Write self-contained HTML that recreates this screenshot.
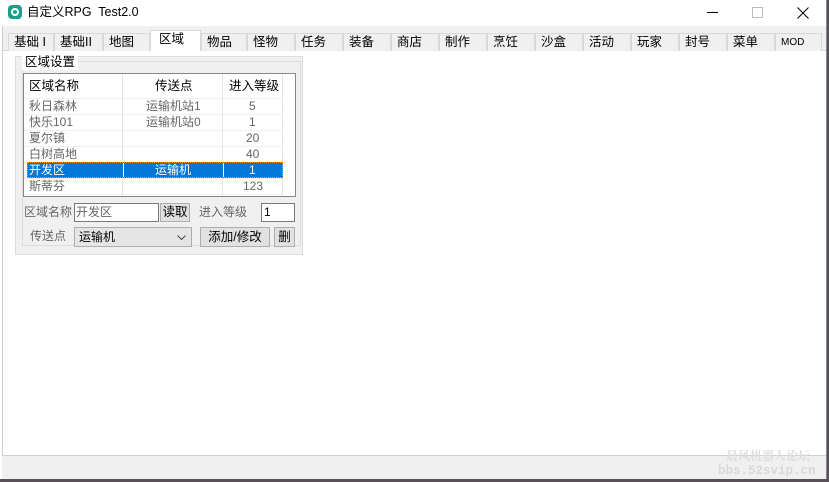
<!DOCTYPE html><html><head><style>
*{margin:0;padding:0;box-sizing:border-box}
body{width:829px;height:482px;background:#5a5058;position:relative;overflow:hidden;font-family:"Liberation Sans","Noto Sans CJK SC",sans-serif;font-size:12px;line-height:15px;color:#000}
.win{position:absolute;left:0;top:0;width:827px;height:479px;background:#fff;border-right:1px solid #888}
.a{position:absolute;white-space:nowrap}
.tab{position:absolute;top:33px;height:18px;border:1px solid #d9d9d9;border-bottom:none;background:#f0f0f0;font-size:12.5px;line-height:16px;padding:0 0 0 5px}
.cell{position:absolute;height:16px;line-height:16px;font-size:12px}
.btn{position:absolute;background:#e1e1e1;border:1px solid #adadad;text-align:center;font-size:12.5px;line-height:16px}
</style></head><body><div class="win">
<div class="a" style="left:8px;top:5px;width:14px;height:14px;border-radius:4px;background:#1a9f8a"></div>
<div class="a" style="left:11px;top:8px;width:8px;height:8px;border-radius:50%;border:2px solid #fff"></div>
<div class="a" style="left:27px;top:5px;font-size:12.5px">自定义RPG&nbsp; Test2.0</div>
<div class="a" style="left:707px;top:12px;width:11px;height:1px;background:#000"></div>
<div class="a" style="left:752px;top:7px;width:11px;height:11px;border:1px solid #bbb"></div>
<svg class="a" style="left:797px;top:7px" width="12" height="12"><path d="M0.5 0.5L11.5 11.5M11.5 0.5L0.5 11.5" stroke="#000" stroke-width="1"/></svg>
<div class="a" style="left:2px;top:26px;width:824px;height:24px;background:#f0f0f0"></div>
<div class="a" style="left:2px;top:50px;width:824px;height:1px;background:#d9d9d9"></div>
<div class="a" style="left:2px;top:26px;width:1px;height:430px;background:#ccc"></div>
<div class="tab" style="left:8px;width:46px">基础 I</div>
<div class="tab" style="left:54px;width:49px">基础II</div>
<div class="tab" style="left:103px;width:47px">地图</div>
<div class="tab" style="left:150px;width:51px;top:30px;height:21px;background:#fff;padding-left:8px;line-height:17px">区域</div>
<div class="tab" style="left:201px;width:46px">物品</div>
<div class="tab" style="left:247px;width:48px">怪物</div>
<div class="tab" style="left:295px;width:48px">任务</div>
<div class="tab" style="left:343px;width:48px">装备</div>
<div class="tab" style="left:391px;width:48px">商店</div>
<div class="tab" style="left:439px;width:48px">制作</div>
<div class="tab" style="left:487px;width:48px">烹饪</div>
<div class="tab" style="left:535px;width:48px">沙盒</div>
<div class="tab" style="left:583px;width:48px">活动</div>
<div class="tab" style="left:631px;width:48px">玩家</div>
<div class="tab" style="left:679px;width:48px">封号</div>
<div class="tab" style="left:727px;width:48px">菜单</div>
<div class="tab" style="left:775px;width:47px;font-size:10px;line-height:17px">MOD</div>
<div class="a" style="left:15px;top:56px;width:288px;height:199px;background:#f0f0f0;border:1px solid #dcdcdc"></div>
<div class="a" style="left:22px;top:61px;width:279px;height:185px;border:1px solid #dcdcdc"></div>
<div class="a" style="left:22px;top:54px;background:#fff;padding:0 3px;font-size:12.5px;line-height:16px">区域设置</div>
<div class="a" style="left:23px;top:73px;width:273px;height:124px;background:#fff;border:1px solid #828790"></div>
<div class="a" style="left:24px;top:98px;width:258px;height:98px;background:linear-gradient(#f0f0f0 1px,transparent 1px) 0 0/100% 16px"></div>
<div class="a" style="left:122px;top:74px;width:1px;height:122px;background:#e5e5e5"></div>
<div class="a" style="left:222px;top:74px;width:1px;height:122px;background:#e5e5e5"></div>
<div class="a" style="left:282px;top:74px;width:1px;height:122px;background:#e5e5e5"></div>
<div class="cell" style="left:29px;top:78px;font-size:12.5px">区域名称</div>
<div class="cell" style="left:155px;top:78px;font-size:12.5px">传送点</div>
<div class="cell" style="left:229px;top:78px;font-size:12.5px">进入等级</div>
<div class="cell" style="left:29px;top:98px;color:#666">秋日森林</div><div class="cell" style="left:146px;top:98px;color:#666">运输机站1</div><div class="cell" style="left:249px;top:98px;color:#666">5</div>
<div class="cell" style="left:29px;top:114px;color:#666">快乐101</div><div class="cell" style="left:146px;top:114px;color:#666">运输机站0</div><div class="cell" style="left:249px;top:114px;color:#666">1</div>
<div class="cell" style="left:29px;top:130px;color:#666">夏尔镇</div><div class="cell" style="left:246px;top:130px;color:#666">20</div>
<div class="cell" style="left:29px;top:146px;color:#666">白树高地</div><div class="cell" style="left:246px;top:146px;color:#666">40</div>
<div class="a" style="left:27px;top:162px;width:256px;height:16px;background:#0078d7;border:1px dotted #f90"></div>
<div class="a" style="left:123px;top:163px;width:1px;height:14px;background:#fff"></div><div class="a" style="left:223px;top:163px;width:1px;height:14px;background:#fff"></div>
<div class="cell" style="left:29px;top:162px;color:#fff">开发区</div><div class="cell" style="left:155px;top:162px;color:#fff">运输机</div><div class="cell" style="left:249px;top:162px;color:#fff">1</div>
<div class="cell" style="left:29px;top:178px;color:#666">斯蒂芬</div><div class="cell" style="left:243px;top:178px;color:#666">123</div>
<div class="a" style="left:24px;top:205px;color:#666">区域名称</div>
<div class="a" style="left:74px;top:203px;width:85px;height:19px;background:#fff;border:1px solid #7a7a7a;padding:1px 1px;color:#666">开发区</div>
<div class="btn" style="left:160px;top:203px;width:30px;height:19px;line-height:17px">读取</div>
<div class="a" style="left:199px;top:205px;color:#666">进入等级</div>
<div class="a" style="left:261px;top:203px;width:34px;height:19px;background:#fff;border:1px solid #7a7a7a;padding:1px 2px">1</div>
<div class="a" style="left:30px;top:229px;color:#666">传送点</div>
<div class="a" style="left:74px;top:227px;width:118px;height:20px;background:#e5e5e5;border:1px solid #adadad;padding:2px 4px">运输机<svg style="position:absolute;right:5px;top:7px" width="9" height="5"><path d="M0.5 0.5L4.5 4.5L8.5 0.5" stroke="#444" fill="none"/></svg></div>
<div class="btn" style="left:200px;top:227px;width:70px;height:20px;line-height:18px">添加/修改</div>
<div class="btn" style="left:274px;top:227px;width:21px;height:20px;line-height:18px">删</div>
<div class="a" style="left:2px;top:455px;width:824px;height:24px;background:#f0f0f0;border-top:1px solid #d0d0d0"></div>
<div class="a" style="left:726px;top:450px;color:#ddd;font-family:'Liberation Mono','Noto Serif CJK SC',serif;font-size:12px;font-weight:bold">晨风机器人论坛</div>
<div class="a" style="left:718px;top:464px;color:#d8d8d8;font-family:'Liberation Mono',monospace;font-size:12.5px;font-weight:bold">bbs.52svip.cn</div>
</div></body></html>
